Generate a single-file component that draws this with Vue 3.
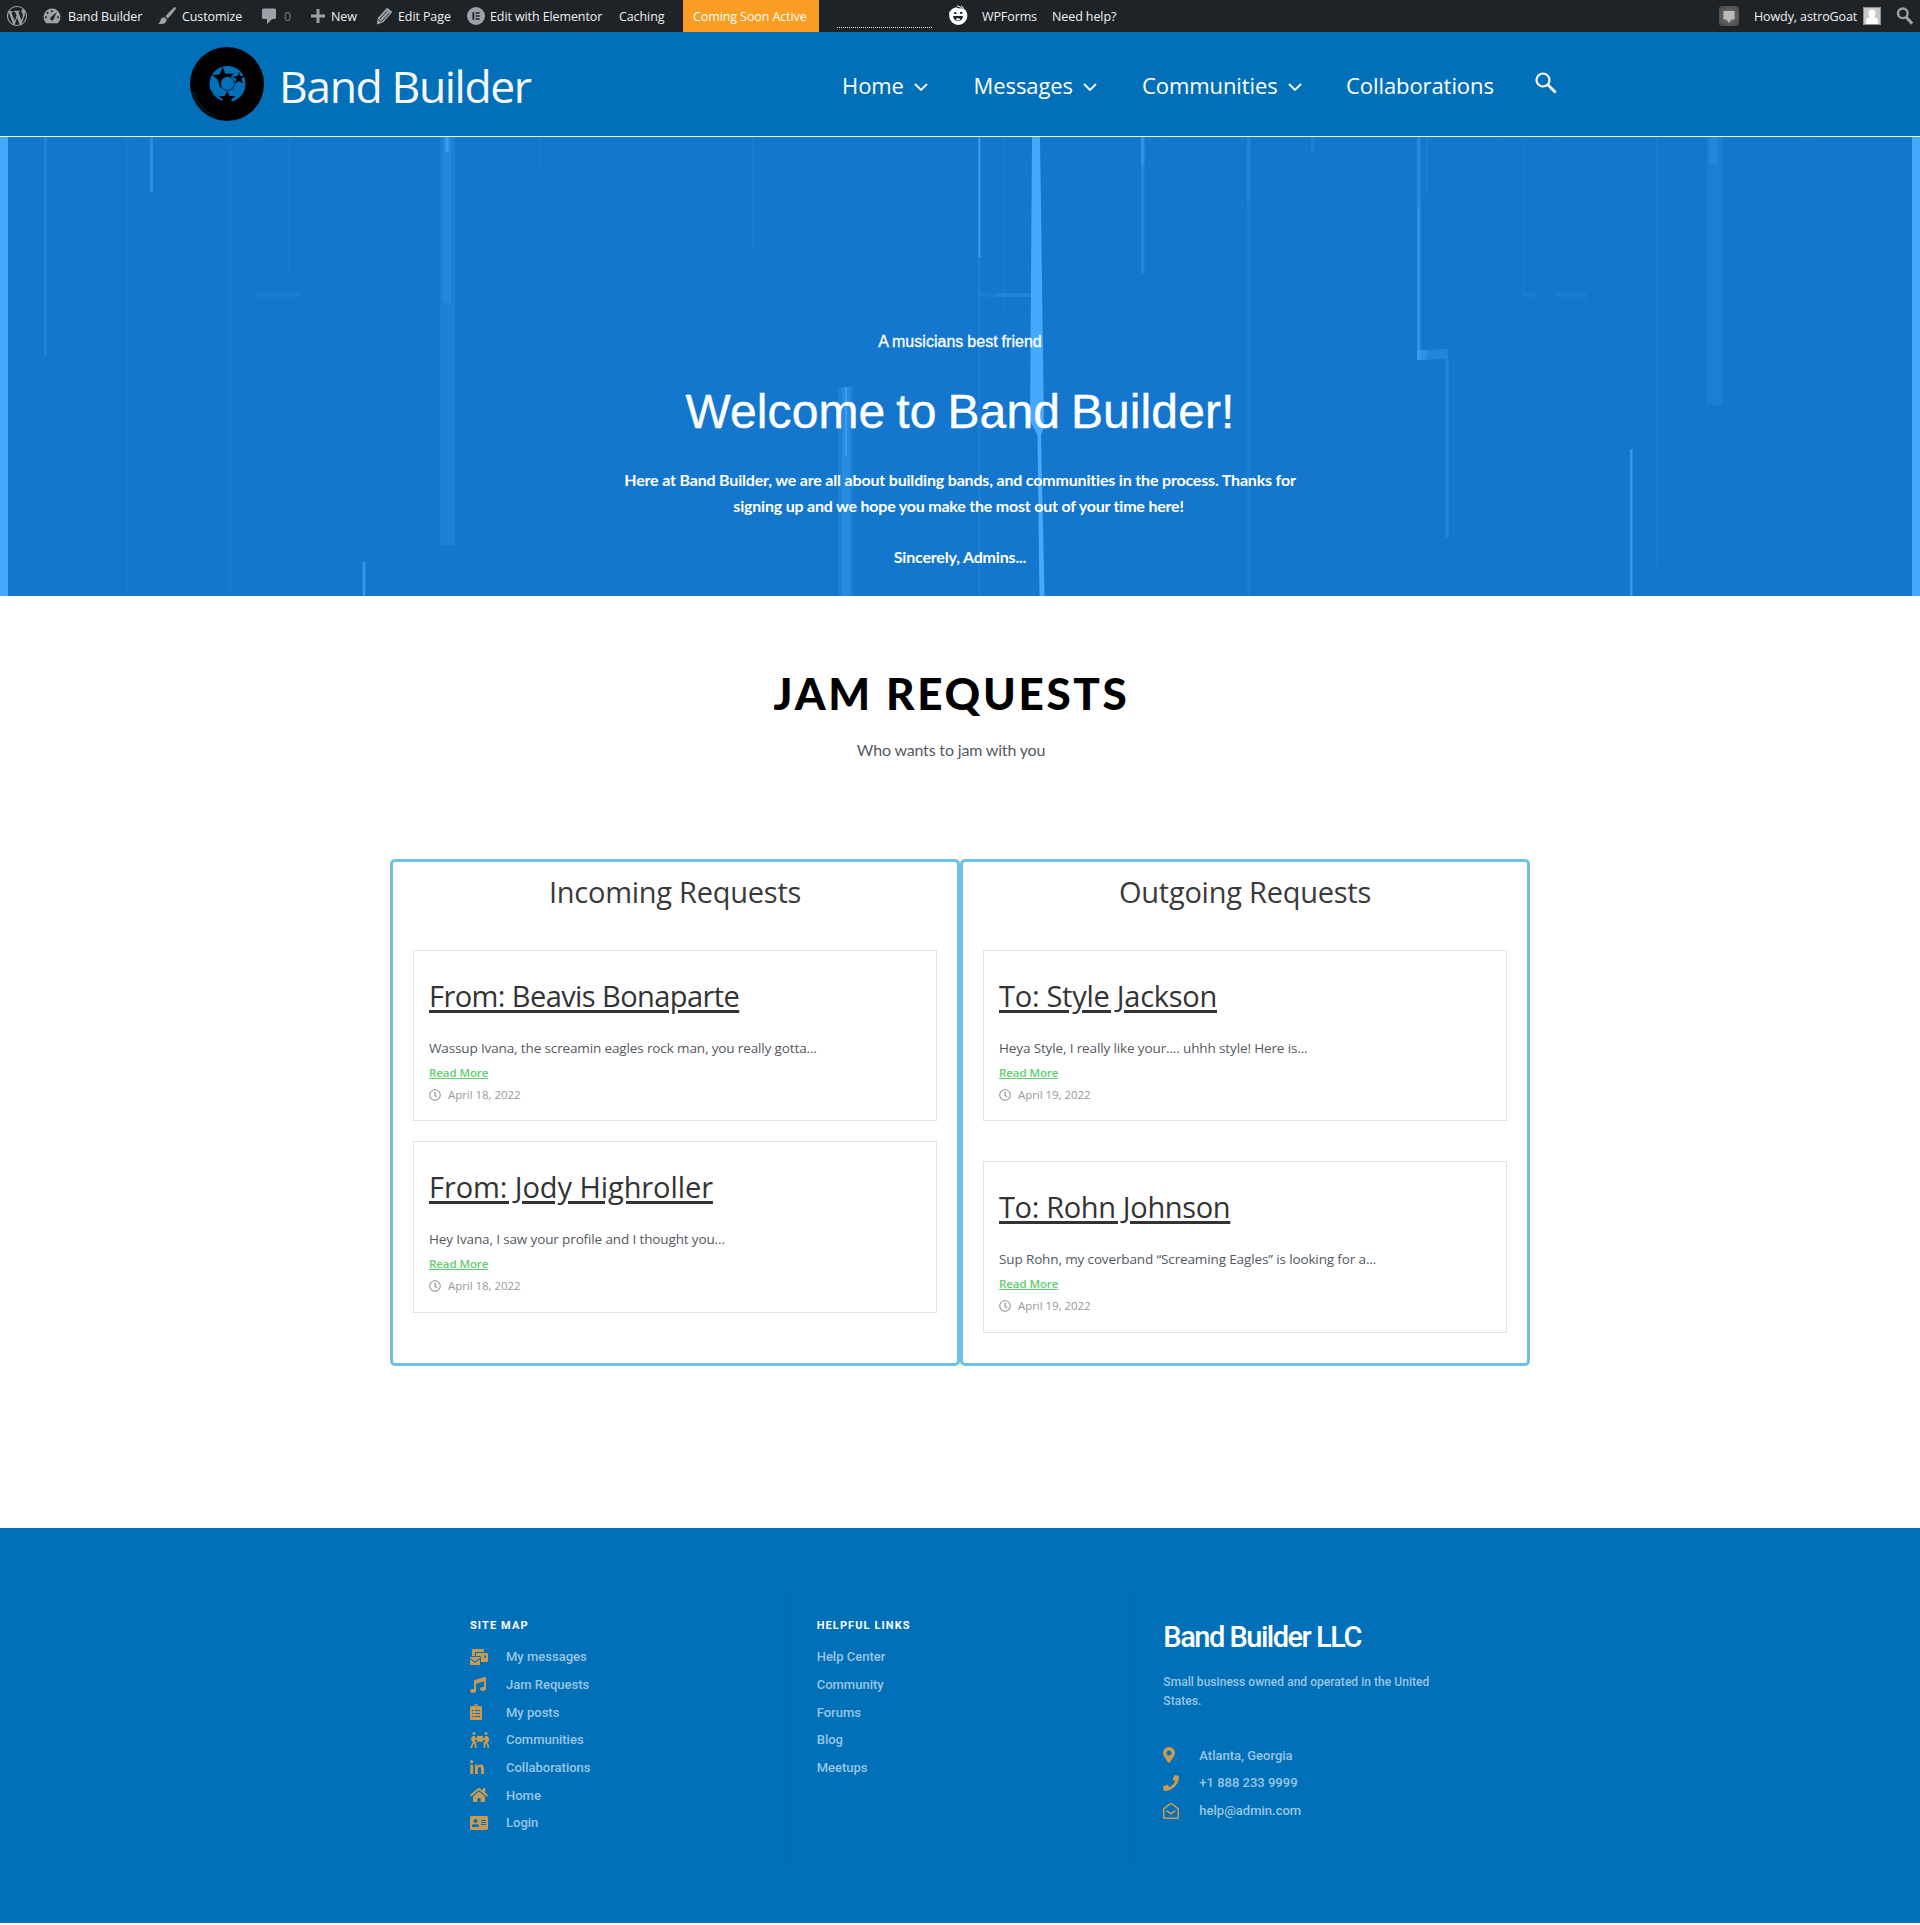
<script setup>
const nav = [
  { label: 'Home', menu: true, width: 131.5 },
  { label: 'Messages', menu: true, width: 168.5 },
  { label: 'Communities', menu: true, width: 204 },
  { label: 'Collaborations', menu: false, width: 188 }
]

const columns = [
  {
    title: 'Incoming Requests',
    gap: 20,
    cards: [
      { title: 'From: Beavis Bonaparte', tracking: -0.58, text: 'Wassup Ivana, the screamin eagles rock man, you really gotta...', date: 'April 18, 2022' },
      { title: 'From: Jody Highroller', tracking: -0.08, text: 'Hey Ivana, I saw your profile and I thought you...', date: 'April 18, 2022' }
    ]
  },
  {
    title: 'Outgoing Requests',
    gap: 40,
    cards: [
      { title: 'To: Style Jackson', tracking: -0.27, text: 'Heya Style, I really like your.... uhhh style! Here is...', date: 'April 19, 2022' },
      { title: 'To: Rohn Johnson', tracking: -0.35, text: 'Sup Rohn, my coverband “Screaming Eagles” is looking for a...', date: 'April 19, 2022' }
    ]
  }
]

const siteMap = [
  { label: 'My messages', w: 18, box: '0 0 576 512', d: 'M96 0h320q32 0 32 32v64H192q-32 0-32 32v96H64V32Q64 0 96 0zM224 128h320q32 0 32 32v224q0 32-32 32H352V288q0-64-48-64H192v-64q0-32 32-32zm224 80v64h64v-64zM0 256h320v32L160 400 0 288zm0 72l160 112 160-112v184H0z' },
  { label: 'Jam Requests', w: 16, box: '0 0 512 512', d: 'M470.38 1.51L150.41 96A32 32 0 0 0 128 126.51v261.41A139 139 0 0 0 96 384c-53 0-96 28.66-96 64s43 64 96 64 96-28.66 96-64V214.32l256-75v184.61a138.4 138.4 0 0 0-32-3.93c-53 0-96 28.66-96 64s43 64 96 64 96-28.65 96-64V32a32 32 0 0 0-41.62-30.49z' },
  { label: 'My posts', w: 12, box: '0 0 384 512', d: 'M336 64h-80a64 64 0 0 0-128 0H48a48 48 0 0 0-48 48v352a48 48 0 0 0 48 48h288a48 48 0 0 0 48-48V112a48 48 0 0 0-48-48zM192 40a24 24 0 1 1 0 48 24 24 0 0 1 0-48zM64 192h56v32H64zm96 0h160v32H160zM64 288h56v32H64zm96 0h160v32H160zM64 384h56v32H64zm96 0h160v32H160z' },
  { label: 'Communities', w: 20, box: '0 0 640 512', d: 'M128 96a48 48 0 1 0 0-96 48 48 0 0 0 0 96zM512 96a48 48 0 1 0 0-96 48 48 0 0 0 0 96zM80 128h64l48 64h32v-64h192v64h32l48-64h64l48 64v96l-56 56 56 80v88h-56v-80l-64-80v160h-56V352l48-64-8-48-56 8v64H224v-64l-56-8-8 48 48 64v160h-56V392l-20-28-44 84-24 64H0l40-96 48-88-48-64v-72z' },
  { label: 'Collaborations', w: 14, box: '0 0 448 512', d: 'M100.28 448H7.4V148.9h92.88zM53.79 108.1C24.09 108.1 0 83.5 0 53.8a53.79 53.79 0 0 1 107.58 0c0 29.7-24.1 54.3-53.79 54.3zM447.9 448h-92.68V302.4c0-34.7-.7-79.2-48.29-79.2-48.29 0-55.69 37.7-55.69 76.7V448h-92.78V148.9h89.08v40.8h1.3c12.4-23.5 42.69-48.3 87.88-48.3 94 0 111.28 61.9 111.28 142.3V448z' },
  { label: 'Home', w: 18, box: '0 0 576 512', d: 'M280.37 148.26L96 300.11V464a16 16 0 0 0 16 16l112.06-.29a16 16 0 0 0 15.92-16V368a16 16 0 0 1 16-16h64a16 16 0 0 1 16 16v95.64a16 16 0 0 0 16 16.05L464 480a16 16 0 0 0 16-16V300L295.67 148.26a12.19 12.19 0 0 0-15.3 0zM571.6 251.47L488 182.56V44.05a12 12 0 0 0-12-12h-56a12 12 0 0 0-12 12v72.61L318.47 43a48 48 0 0 0-61 0L4.34 251.47a12 12 0 0 0-1.6 16.9l25.5 31A12 12 0 0 0 45.15 301l235.22-193.74a12.19 12.19 0 0 1 15.3 0L530.9 301a12 12 0 0 0 16.9-1.6l25.5-31a12 12 0 0 0-1.7-16.93z' },
  { label: 'Login', w: 18, box: '0 0 576 512', d: 'M48 32h480a48 48 0 0 1 48 48v352a48 48 0 0 1-48 48H48a48 48 0 0 1-48-48V80a48 48 0 0 1 48-48zM176 128a64 64 0 1 0 0 128 64 64 0 0 0 0-128zM112 288q-48 8-48 64v32h224v-32q0-56-48-64-64 32-128 0zM352 160v32h160v-32zm0 64v32h160v-32zm0 64v32h160v-32z' }
]

const helpful = ['Help Center', 'Community', 'Forums', 'Blog', 'Meetups']

const contacts = [
  { label: 'Atlanta, Georgia', w: 12, box: '0 0 384 512', d: 'M172.268 501.67C26.97 291.031 0 269.413 0 192 0 85.961 85.961 0 192 0s192 85.961 192 192c0 77.413-26.97 99.031-172.268 309.67-9.535 13.774-29.93 13.773-39.464 0zM192 272c44.183 0 80-35.817 80-80s-35.817-80-80-80-80 35.817-80 80 35.817 80 80 80z' },
  { label: '+1 888 233 9999', w: 16, box: '0 0 512 512', d: 'M493.4 24.6l-104-24c-11.3-2.6-22.9 3.3-27.5 13.9l-48 112c-4.2 9.8-1.4 21.3 6.9 28l60.6 49.6c-36 76.7-98.9 140.5-177.2 177.2l-49.6-60.6c-6.8-8.3-18.2-11.1-28-6.9l-112 48C3.9 366.5-2 378.1.6 389.4l24 104C27.1 504.2 36.7 512 48 512c256.1 0 464-207.5 464-464 0-11.2-7.7-20.9-18.6-23.4z' },
  { label: 'help@admin.com', w: 16, box: '0 0 512 512', d: 'M48 512a48 48 0 0 1-48-48V190q0-20 16-32L200 18q56-38 112 0l184 140q16 12 16 32v274a48 48 0 0 1-48 48zM48 196v268h416V196L284 58q-28-18-56 0zM106 256l22-28q8-6 18 0l84 66q26 16 52 0l84-66q10-6 18 0l22 28q4 10-4 18l-88 68q-58 38-116 0l-88-68q-8-8-4-18z' }
]

// x, y, width, height, opacity of each light beam behind the hero copy
const beams = [
  [44, 0, 3, 219, 0.25], [126, 0, 3, 459, 0.06], [150, 0, 3, 55, 0.45], [228, 0, 3, 459, 0.08], [255, 0, 2, 158, 0.08],
  [256, 156, 44, 4, 0.13], [288, 0, 2, 140, 0.08], [440, 0, 15, 408, 0.19], [443, 0, 8, 166, 0.2], [445.5, 0, 3, 15, 0.7],
  [539, 0, 2, 34, 0.06], [752, 0, 2, 112, 0.1], [362.5, 425, 3, 34, 0.6], [838, 250, 15, 209, 0.2], [842, 250, 8, 209, 0.25],
  [845, 250, 2, 68, 0.6], [978, 0, 2.5, 120, 0.65], [978, 120, 3, 339, 0.14], [1003, 0, 2, 180, 0.06], [978, 156, 18, 4, 0.12],
  [996, 156, 35, 4, 0.28], [1141, 0, 3.5, 28, 0.55], [1141, 28, 3.5, 108, 0.32], [1165, 0, 2, 459, 0.05], [1247, 0, 3.5, 64, 0.28],
  [1247, 64, 3.5, 395, 0.15], [1311, 0, 3, 15, 0.18], [1417, 0, 3.5, 70, 0.38], [1417, 70, 3.5, 153, 0.55], [1426, 0, 2, 55, 0.12],
  [1445.5, 222, 3, 178, 0.35], [1496, 0, 2, 459, 0.05], [1522, 0, 2, 158, 0.06], [1522, 156, 14, 4, 0.12], [1556, 156, 30, 4, 0.12],
  [1556, 0, 1, 459, 0.08], [1584, 158, 2, 140, 0.05], [1630, 312, 2.5, 147, 0.65], [1656, 0, 2, 430, 0.09], [1707, 0, 15, 268, 0.17],
  [1710, 0, 8, 26, 0.2], [1807, 0, 2, 400, 0.06]
]
</script>

<template>
  <div class="page">
    <div class="adminbar">
      <svg class="ab-wp" viewBox="0 0 20 20"><path d="M20 10c0-5.51-4.49-10-10-10C4.48 0 0 4.49 0 10c0 5.52 4.48 10 10 10 5.51 0 10-4.48 10-10zM7.78 15.37L4.37 6.22c.55-.02 1.17-.08 1.17-.08.5-.06.44-1.13-.06-1.11 0 0-1.45.11-2.37.11-.18 0-.37 0-.58-.01C4.12 2.69 6.87 1.11 10 1.11c2.33 0 4.45.87 6.05 2.34-.68-.11-1.65.39-1.65 1.58 0 .74.45 1.36.9 2.1.35.61.55 1.36.55 2.46 0 1.49-1.4 5-1.4 5l-3.03-8.37c.54-.02.82-.17.82-.17.5-.05.44-1.25-.06-1.22 0 0-1.44.12-2.38.12-.87 0-2.33-.12-2.33-.12-.5-.03-.56 1.2-.06 1.22l.92.08 1.26 3.41zM17.41 10c.24-.64.74-1.87.43-4.25.7 1.29 1.05 2.71 1.05 4.25 0 3.29-1.73 6.24-4.4 7.78.97-2.59 1.94-5.2 2.92-7.78zM6.1 18.09C3.12 16.65 1.11 13.53 1.11 10c0-1.3.23-2.48.72-3.59C3.25 10.3 4.67 14.2 6.1 18.09zm4.03-6.63l2.58 6.98c-.86.29-1.76.45-2.71.45-.79 0-1.57-.11-2.29-.33.81-2.38 1.62-4.74 2.42-7.1z" /></svg>
      <svg viewBox="0 0 20 20"><path fill-rule="evenodd" d="M4 17.2A8.3 8.3 0 0 1 1.6 11a8.4 8.4 0 0 1 16.8 0A8.3 8.3 0 0 1 16 17.2zM10 4.2a1 1 0 1 0 0 2.1 1 1 0 0 0 0-2.1zM5.6 6a1 1 0 1 0 0 2.1 1 1 0 0 0 0-2.1zM4 10.2a1 1 0 1 0 0 2.1 1 1 0 0 0 0-2.1zM16 10.2a1 1 0 1 0 0 2.1 1 1 0 0 0 0-2.1zM14.8 6L9.4 10.8Q7.8 12 8.4 13.6q1.4 1.8 3 .2z" /></svg>
      <span>Band Builder</span>
      <svg viewBox="0 0 20 20"><path d="M18.300 1.200q1 .8.4 1.800-3.600 5.400-8 9.400L8.600 10.300q3.900-5 8.300-8.900.8-.6 1.400-.2zM7.700 11.300l2 2q-.2 3.800-3.300 4.500-2.900.7-5.400-.2 2-.8 2.400-2.900.7-3.500 4.300-3.400z" /></svg>
      <span>Customize</span>
      <svg viewBox="0 0 20 20"><path d="M4.500 2.500h11q1.500 0 1.500 1.500v7.500q0 1.500-1.500 1.500H13l-5 5v-5H4.500Q3 13 3 11.500V4q0-1.500 1.500-1.500z" /></svg>
      <span class="dim">0</span>
      <svg viewBox="0 0 20 20"><path d="M8.500 3h3v5.500H17v3h-5.500V17h-3v-5.500H3v-3h5.500z" /></svg>
      <span>New</span>
      <svg viewBox="0 0 20 20"><path d="M13.900 2.200l3.900 3.300q.5.600 0 1.300L9 16.500l-6.200 2.100.9-6.500 8.900-9.800q.6-.6 1.300-.1z" /><path d="M6 13l7.300-8.200M8 15l7.500-8.300M3.800 13.200l4 3" stroke="#1d2327" stroke-width=".9" fill="none" /></svg>
      <span>Edit Page</span>
      <svg class="ab-el" viewBox="0 0 20 20"><circle cx="10" cy="10" r="10" /><path d="M6 5.800h2v8.400H6zM9.400 5.800H14v1.700H9.400zm0 3.350H14v1.700H9.400zm0 3.350H14v1.700H9.400z" fill="#1d2327" /></svg>
      <span>Edit with Elementor</span>
      <span>Caching</span>
      <span class="coming">Coming Soon Active</span>
      <i class="dots"></i>
      <svg class="ab-face" viewBox="0 0 20 20"><path fill="#fff" d="M1.600 6.500Q4 3 8 2.200q3 1.800 6.500 1.200l3 1.600q1.900 2.800 1.900 6A9 8.800 0 0 1 1.200 11Q1 8 1.600 6.500z" /><path d="M9 .8q4 .6 5 3.200M13 .8q2 1 2.500 3" stroke="#fff" fill="none" /><path d="M5 11h10q-.6 5-5 5t-5-5zM6 7.300h2.400v1.800H6zM12 7h2.400v1.800H12z" fill="#1d2327" /><path d="M7.500 14q2.500-1.500 5 0-1 1.500-2.500 1.500T7.500 14z" fill="#fff" /></svg>
      <span>WPForms</span>
      <span>Need help?</span>
      <i class="note"><svg viewBox="0 0 20 20"><path d="M4.500 5h11v8.500h-3L10 17l-2.500-3.500h-3z" fill="#bbb" /></svg></i>
      <span>Howdy, astroGoat</span>
      <svg class="avatar" viewBox="0 0 18 18"><path fill="#8c8f94" d="M0 0h18v18H0z" /><path fill="#c8c8c8" d="M1 1h16v16H1z" /><path fill="#fff" d="M9 2.500c2.300 0 3.500 1.700 3.500 3.800 0 1.500-.6 2.800-1.500 3.600 2.500.6 4 2 4 4.600V17H3v-2.500c0-2.600 1.500-4 4-4.600-.9-.8-1.500-2.100-1.500-3.600C5.500 4.200 6.700 2.500 9 2.500z" /></svg>
      <svg viewBox="0 0 20 20"><circle cx="7.800" cy="7.300" r="4.800" fill="none" stroke="#9ca2a7" stroke-width="2.400" /><path d="M11 11l6.200 6.600" stroke="#9ca2a7" stroke-width="3" /></svg>
    </div>

    <header class="header">
      <svg class="logo" viewBox="0 0 74 74">
        <circle cx="37" cy="37" r="37" />
        <path d="M2 45q4 20 24 27M4.500 45q4 17 20 24" stroke="#0170b9" stroke-width=".4" fill="none" />
        <circle cx="37.500" cy="37" r="18" fill="#0170b9" />
        <path d="M32.600 20l3 7 8.400-.600-6 6.200 1.600 5-8.600-1v5l-2-4.600-1.500-4.500-5.500-4.500 7.500-.600zM49 25l1.300 4 4.700-.2-3.600 3 1.600 4.700-4-2.600-3.800 3 1.200-4.900-3.800-2.600 4.800-.1zM37.300 44l2.300 5h6l-4.300 3.500 2 5.500H31l2-5.500-4.500-3.500h6z" />
        <circle cx="37.500" cy="36.500" r="7" fill="#0170b9" stroke="#000" stroke-width=".7" />
        <path d="M20.500 43q4 9 13 11.500" stroke="#000" fill="none" />
      </svg>
      <div class="site-title">Band Builder</div>
      <nav class="nav">
        <a v-for="n in nav" :key="n.label" :style="{ width: n.width + 'px' }">{{ n.label }}<svg v-if="n.menu" viewBox="0 0 14 8"><path d="M1 1l6 6 6-6" /></svg></a>
      </nav>
      <svg class="search" viewBox="0 0 22 22"><circle cx="8" cy="8" r="6.500" fill="none" stroke="#fff" stroke-width="2.200" /><path d="M12.600 12.600l8 8" stroke="#fff" stroke-width="2.800" /></svg>
    </header>

    <section class="hero">
      <svg class="beams" viewBox="0 0 1920 459">
        <rect v-for="(b, i) in beams" :key="i" :x="b[0]" :y="b[1]" :width="b[2]" :height="b[3]" :opacity="b[4]" />
        <path d="M1032 0h8L1044 290l-3 8 3.500 161h-5l-2-161-7.500-14z" />
        <path d="M1417 213l31-1v10l-31 1z" opacity=".3" />
        <path d="M1417 213h10v10h-10z" opacity=".3" />
      </svg>
      <p class="kicker">A musicians best friend</p>
      <h1>Welcome to Band Builder!</h1>
      <p class="lead">Here at Band Builder, we are all about building bands, and communities in the process. Thanks for<br><span class="tight">signing up and we hope you make the most out of your time here!</span><br><br>Sincerely, Admins...</p>
    </section>

    <main>
      <h2>JAM REQUESTS</h2>
      <p class="sub">Who wants to jam with you</p>
      <div class="boxes">
        <section v-for="c in columns" :key="c.title" class="box">
          <h3>{{ c.title }}</h3>
          <div class="cards" :style="{ gap: c.gap + 'px' }">
            <article v-for="r in c.cards" :key="r.title" class="card">
              <h4><a :style="{ letterSpacing: r.tracking + 'px' }">{{ r.title }}</a></h4>
              <p class="excerpt">{{ r.text }}</p>
              <div class="more"><a>Read More</a></div>
              <div class="date">
                <svg viewBox="0 0 512 512"><path d="M256 8C119 8 8 119 8 256s111 248 248 248 248-111 248-248S393 8 256 8zm0 448c-110.500 0-200-89.500-200-200S145.500 56 256 56s200 89.500 200 200-89.500 200-200 200zm61.800-104.400l-84.900-61.700c-3.100-2.300-4.900-5.900-4.900-9.700V116c0-6.600 5.400-12 12-12h32c6.600 0 12 5.400 12 12v141.700l66.800 48.600c5.400 3.900 6.500 11.400 2.600 16.800L334.600 349c-3.900 5.300-11.400 6.500-16.800 2.600z" /></svg>
                {{ r.date }}
              </div>
            </article>
          </div>
        </section>
      </div>
    </main>

    <footer>
      <div class="fcol">
        <h5>SITE MAP</h5>
        <ul>
          <li v-for="s in siteMap" :key="s.label"><i><svg :viewBox="s.box" :width="s.w" height="16"><path fill-rule="evenodd" :d="s.d" /></svg></i>{{ s.label }}</li>
        </ul>
      </div>
      <div class="fcol">
        <h5>HELPFUL LINKS</h5>
        <ul><li v-for="h in helpful" :key="h">{{ h }}</li></ul>
      </div>
      <div class="fcol">
        <h6>Band Builder LLC</h6>
        <p>Small business owned and operated in the United States.</p>
        <ul>
          <li v-for="s in contacts" :key="s.label"><i><svg :viewBox="s.box" :width="s.w" height="16"><path fill-rule="evenodd" :d="s.d" /></svg></i>{{ s.label }}</li>
        </ul>
      </div>
    </footer>
  </div>
</template>

<style>
body { margin: 0; background: #fff; }
</style>

<style scoped>
* { box-sizing: border-box; }
h1, h2, h3, h4, h5, h6, p, ul { margin: 0; padding: 0; font-weight: 400; }
.page { width: 1920px; height: 1925px; overflow: hidden; font-family: "Open Sans", "Noto Sans", sans-serif; }

.adminbar {
  height: 32px; background: #1d2327; color: #f0f0f1; padding-left: 7px;
  display: grid; align-items: center;
  grid-template-columns: 35px 26px 89px 25px 77px 25px 24px 23px 43px 24px 68px 24px 129px 64px 154px 111px 34px 70px 667px 35px 109px 32px 20px;
  font-size: 12.5px; line-height: 32px; letter-spacing: -0.1px; white-space: nowrap;
}
.adminbar svg { width: 20px; height: 20px; fill: #9ca2a7; display: block; }
.adminbar span { padding-top: 1px; height: 32px; line-height: 31px; }
.adminbar .ab-el { width: 18px; height: 18px; margin-left: 1px; }
.adminbar .ab-face { width: 20px; height: 20px; margin-top: -2px; }
.adminbar .avatar { width: 18px; height: 18px; }
.dim { color: #9ca2a7; opacity: .7; }
.coming { justify-self: start; width: 136px; background: #fa9d23; color: #fff; padding-left: 10px; }
.dots { width: 95px; border-bottom: 1px dotted #ddd; height: 24px; }
.note { width: 20px; height: 20px; border-radius: 3px; background: radial-gradient(#777, #444); }

.header {
  height: 105px; background: #0170b9; border-bottom: 1px solid #f0f0f0;
  display: flex; align-items: center; padding-left: 190px; color: #f7f7f9;
}
.logo { width: 74px; height: 74px; flex: none; }
.site-title { width: 563px; margin: 4px 0 0 15px; font-size: 44.5px; line-height: 60px; letter-spacing: -1.4px; }
.nav { display: flex; padding-top: 2px; font-size: 22px; line-height: 30px; letter-spacing: -0.08px; color: #fff; }
.nav a { display: flex; align-items: center; gap: 10px; }
.nav svg { width: 14px; height: 8px; margin-top: 4px; fill: none; stroke: #fff; stroke-width: 1.800; }
.search { width: 22px; height: 22px; margin: -2px 0 0 1px; }

.hero {
  position: relative; height: 459px; padding-top: 193px; background: #1477cd;
  border: solid #46a8ff; border-width: 0 8px; color: #fff; text-align: center;
}
.beams { position: absolute; left: -8px; top: 0; width: 1920px; height: 459px; fill: #46a8ff; }
.hero p, .hero h1 { position: relative; }
.kicker { font: 16px/24px "Liberation Sans", sans-serif; letter-spacing: .02px; word-spacing: -0.5px; -webkit-text-stroke: .3px #fff; }
.hero h1 { font: 48px/58px "Liberation Sans", sans-serif; letter-spacing: .1px; word-spacing: -2.500px; margin-top: 29px; -webkit-text-stroke: .4px #fff; }
.hero .lead { margin-top: 26px; font: 700 16px/25.600px Lato, sans-serif; letter-spacing: -0.18px; }
.tight { letter-spacing: -0.21px; margin-right: 3px; }

main { height: 932px; padding-top: 71px; }
main h2 { font: 900 44px/52px Lato, sans-serif; letter-spacing: 2.700px; color: #000; text-align: center; padding-right: 17px; }
.sub { margin-top: 18px; font: 16px/26px Lato, sans-serif; letter-spacing: -0.17px; color: #54595f; text-align: center; padding-right: 18px; }
.boxes { display: flex; width: 1140px; margin: 96px auto 0; }
.box { width: 570px; height: 507px; border: 3px solid #6ec1e4; border-radius: 5px; padding: 12px 20px 0; }
.box h3 { font-size: 29px; line-height: 36px; letter-spacing: -0.25px; text-align: center; color: #3a3a3a; }
.cards { display: flex; flex-direction: column; margin-top: 40px; }
.card { height: 171.400px; border: 1px solid #e2e2e2; padding: 25px 15px 0; white-space: nowrap; }
.card h4 { font-size: 29px; line-height: 40px; color: #333; }
.card h4 a { text-decoration: underline; text-decoration-thickness: 3px; text-underline-offset: 3px; }
.excerpt { margin-top: 20px; font-size: 13.500px; line-height: 24px; letter-spacing: -0.130px; color: #54595f; }
.more { margin-top: 1px; font-size: 11.500px; line-height: 24px; font-weight: 600; letter-spacing: -0.080px; color: #61ce70; }
.more a { text-decoration: underline; text-underline-offset: 1px; text-decoration-thickness: 1px; }
.date { display: flex; align-items: center; gap: 7px; font-size: 11.500px; line-height: 20px; letter-spacing: -0.05px; color: #999; }
.date svg { width: 12px; height: 12px; fill: #999; }

footer { height: 395px; background: #0170b9; padding: 60px 440px 0; display: flex; font-family: Roboto, sans-serif; }
.fcol { flex: 1; height: 277px; padding: 30px 30px 0; border-radius: 10px; box-shadow: 0 0 10px rgba(0, 0, 0, .02); }
.fcol h5 { font-size: 11px; font-weight: 700; line-height: 16px; letter-spacing: 1.100px; color: #fff; margin-bottom: 9px; }
.fcol ul { list-style: none; font-size: 13px; font-weight: 500; color: #99c6e3; }
.fcol li { display: flex; align-items: center; height: 27.700px; }
.fcol i { width: 36px; display: flex; }
.fcol i svg { fill: #c89a54; }
.fcol h6 { margin-top: 2px; font-size: 29px; font-weight: 500; line-height: 34px; letter-spacing: -1.500px; color: #fff; }
.fcol p { margin: 19.400px 0 30px; width: 280px; font-size: 12px; font-weight: 500; line-height: 19px; letter-spacing: .04px; color: #99c6e3; }
</style>
